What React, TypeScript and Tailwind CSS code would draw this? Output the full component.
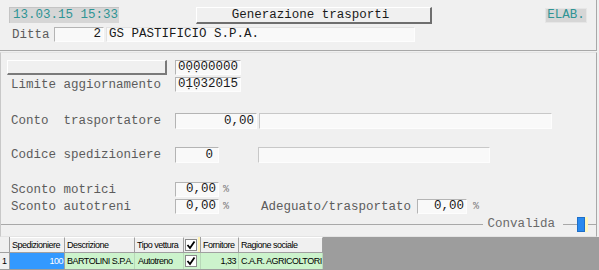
import React from "react";

const Input = ({ w, h = 15, children, align = "right", className = "" }: { w: number; h?: number; children?: React.ReactNode; align?: "right" | "left"; className?: string }) => (
  <div
    className={`box-border flex items-center border-t border-l border-t-[#b4b4b4] border-l-[#b4b4b4] border-r border-b border-r-[#fdfdfd] border-b-[#fdfdfd] bg-[#f9f9f9] text-[#1a1a1a] px-[2px] leading-none whitespace-nowrap ${align === "right" ? "justify-end" : "justify-start"} ${className}`}
    style={{ width: w, height: h }}
  >
    {children}
  </div>
);

const Check = () => (
  <div className="w-[12px] h-[12px] bg-white border border-[#8a8a8a] flex items-center justify-center">
    <svg width="10" height="10" viewBox="0 0 10 10">
      <polyline points="1.5,5 4,8 8.5,1.5" fill="none" stroke="#000" strokeWidth="1.8" />
    </svg>
  </div>
);

const Label = ({ children, className = "w-[175px] pl-[11px]" }: { children: React.ReactNode; className?: string }) => (
  <div className={`leading-none whitespace-pre pt-[1px] ${className}`}>{children}</div>
);

export default function App() {
  return (
    <div className="w-[599px] h-[270px] bg-[#f0f0f0] overflow-hidden flex flex-col font-['Liberation_Mono',monospace] text-[12.5px] text-[#5c5c5c]">
      {/* Header */}
      <div className="h-[51px] w-[597px] shrink-0 border-r border-b border-r-[#a8a8a8] border-b-[#a8a8a8] flex flex-col">
        <div className="flex items-start pt-[7px]">
          <div className="ml-[9px] w-[110px] h-[16px] box-border bg-[#d6d6d6] border-t border-l border-t-[#c4c4c4] border-l-[#c4c4c4] text-[#2f9494] flex items-center pl-[3px] leading-none">
            13.03.15 15:33
          </div>
          <div className="ml-[77px] w-[236px] h-[17px] box-border bg-[#f0f0f0] border-t border-l border-t-white border-l-white border-r-2 border-b-2 border-r-[#6e6e6e] border-b-[#6e6e6e] flex items-center justify-center text-[#1a1a1a] leading-none pr-[6px]">
            Generazione trasporti
          </div>
          <div className="ml-auto mr-[9px] mt-[1px] w-[42px] h-[15px] box-border bg-[#d6d6d6] border border-[#e6e6e6] text-[#2f9494] flex items-center justify-center leading-none">
            ELAB.
          </div>
        </div>
        <div className="flex items-center mt-[3px]">
          <Label className="w-[54px] pl-[12px]">Ditta</Label>
          <Input w={50} h={15}>2</Input>
          <Input w={309} h={15} align="left" className="ml-[2px] border-t-[#e2e2e2] border-l-[#e2e2e2] bg-[#f7f7f7]">
            GS PASTIFICIO S.P.A.
          </Input>
        </div>
      </div>

      {/* Main panel */}
      <div className="h-[185px] w-[597px] shrink-0 mt-[1px] box-border border-t border-l border-r border-b border-t-[#e4e4e4] border-l-[#c8c8c8] border-r-[#a8a8a8] border-b-[#e4e4e4] flex flex-col">
        <div className="flex items-center mt-[7px]">
          <div className="ml-[6px] w-[160px] h-[15px] box-border bg-[#f0f0f0] border-t border-l border-t-white border-l-white border-r-2 border-b-2 border-r-[#7a7a7a] border-b-[#7a7a7a]" />
          <Input w={66} className="ml-[8px]" align="left">0{"0\u0323"}{"0\u0323"}00000</Input>
        </div>
        <div className="flex items-center mt-[2px]">
          <Label className="w-[174px] pl-[10px]">Limite aggiornamento</Label>
          <Input w={66} align="left">0{"1\u0323"}{"0\u0323"}32015</Input>
        </div>
        <div className="flex items-center mt-[21px]">
          <Label className="w-[174px] pl-[10px]">Conto  trasportatore</Label>
          <Input w={82} h={16}>0,00</Input>
          <Input w={293} h={16} className="ml-[2px] border-t-[#c8c8c8] border-l-[#c8c8c8]" />
        </div>
        <div className="flex items-center mt-[18px]">
          <Label className="w-[174px] pl-[10px]">Codice spedizioniere</Label>
          <Input w={44} h={16} className="pr-[5px] border-r-[#f0f0f0] border-b-[#f0f0f0]">0</Input>
          <Input w={232} h={16} className="ml-[39px] border-t-[#c8c8c8] border-l-[#c8c8c8]" />
        </div>
        <div className="flex items-center mt-[19px]">
          <Label className="w-[174px] pl-[10px]">Sconto motrici</Label>
          <Input w={44}>0,00</Input>
          <span className="ml-[4px] text-[10px] leading-none text-[#777]">%</span>
        </div>
        <div className="flex items-center mt-[2px]">
          <Label className="w-[174px] pl-[10px]">Sconto autotreni</Label>
          <Input w={44}>0,00</Input>
          <span className="ml-[4px] text-[10px] leading-none text-[#777]">%</span>
          <Label className="ml-[32px] w-[156px]">Adeguato/trasportato</Label>
          <Input w={50}>0,00</Input>
          <span className="ml-[6px] text-[10px] leading-none text-[#777]">%</span>
        </div>
        <div className="flex items-center mt-[3px] h-[15px]">
          <div className="flex-1 h-px bg-[#a8a8a8]" />
          <div className="px-[4px] leading-none text-[#6a6a6a]">Convalida</div>
          <div className="ml-[4px] w-[14px] h-px bg-[#a8a8a8]" />
          <div className="w-[8px] h-[15px] bg-[#2a8af0] border border-[#1f6fc8]" />
          <div className="w-[3px] h-[15px] bg-[#fff7c0]" />
          <div className="w-[8px] h-px bg-[#a8a8a8]" />
        </div>
      </div>

      {/* Grid */}
      <div className="flex-1 bg-[#9d9d9d] font-['Liberation_Sans',Arial,sans-serif] text-[9px] tracking-[-0.5px] text-black leading-none whitespace-nowrap">
        <div className="flex h-[16px]">
          <div className="w-[10px] bg-[#f0f0f0] border-r border-b border-[#a0a0a0]" />
          {[
            ["Spedizioniere", 55],
            ["Descrizione", 70],
            ["Tipo vettura", 49],
          ].map(([t, w]) => (
            <div key={t as string} className="box-border overflow-hidden bg-[#f0f0f0] border-r border-b border-[#a0a0a0] border-t border-t-white flex items-center pl-[2px]" style={{ width: w as number }}>
              {t}
            </div>
          ))}
          <div className="box-border w-[17px] bg-[#f0f0f0] border-r border-b border-[#a0a0a0] flex items-center pl-[1px]">
            <Check />
            <div className="ml-[1px] w-[2px] h-full bg-[#fff2b8]" />
          </div>
          {[
            ["Fornitore", 38],
            ["Ragione sociale", 84],
          ].map(([t, w]) => (
            <div key={t as string} className="box-border overflow-hidden bg-[#f0f0f0] border-r border-b border-[#a0a0a0] border-t border-t-white flex items-center pl-[2px]" style={{ width: w as number }}>
              {t}
            </div>
          ))}
        </div>
        <div className="flex h-[16px]">
          <div className="w-[10px] bg-[#f0f0f0] border-r border-[#a0a0a0] flex items-center pl-[2px]">1</div>
          <div className="box-border w-[55px] bg-[#3399ff] text-white flex items-center justify-end pr-[1px] border-r border-[#a0a0a0]">100</div>
          <div className="box-border overflow-hidden w-[70px] bg-[#ccf3cc] flex items-center pl-[2px] border-r border-[#b8d8b8]">BARTOLINI S.P.A.</div>
          <div className="box-border w-[49px] bg-[#ccf3cc] flex items-center pl-[3px] border-r border-[#b8d8b8]">Autotreno</div>
          <div className="box-border w-[17px] bg-[#ccf3cc] flex items-center pl-[1px] border-r border-[#b8d8b8]">
            <Check />
          </div>
          <div className="box-border w-[38px] bg-[#ccf3cc] flex items-center justify-end pr-[2px] border-r border-[#b8d8b8]">1,33</div>
          <div className="box-border overflow-hidden w-[84px] bg-[#ccf3cc] flex items-center pl-[2px] border-r border-[#b8d8b8]">C.A.R. AGRICOLTORI</div>
        </div>
      </div>
    </div>
  );
}
